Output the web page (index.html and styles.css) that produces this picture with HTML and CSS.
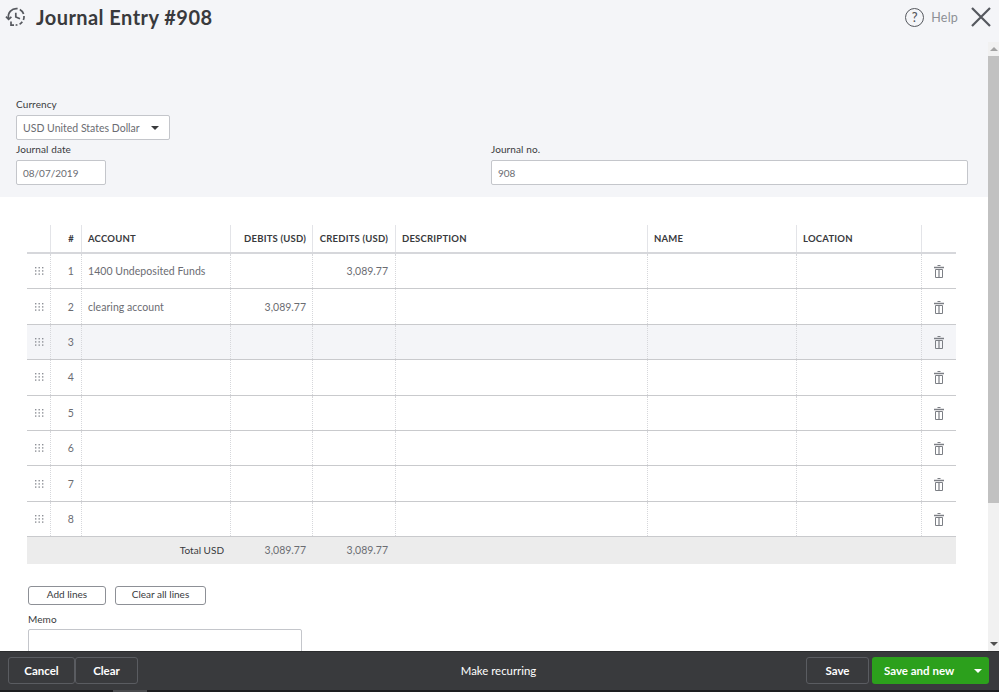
FILE: index.html
```html
<!DOCTYPE html>
<html lang="en">
<head>
<meta charset="utf-8">
<title>Journal Entry #908</title>
<link rel="stylesheet" href="styles.css">
</head>
<body>
<div class="app">
  <div class="viewport">
    <header class="header">
      <div class="title-wrap">
        <svg class="clock" viewBox="0 0 22 22" width="22" height="22" fill="none" stroke="#55585e" stroke-width="1.7">
          <path d="M3.6 12.5 A8 8 0 0 1 12.6 2.7" />
          <path d="M14.8 3.6 A8 8 0 0 1 18.6 8" />
          <path d="M19 10 A8 8 0 0 1 18.4 14" />
          <path d="M17.3 15.8 A8 8 0 0 1 14.6 18.2" />
          <path d="M12.4 18.9 A8 8 0 0 1 10.6 19" />
          <path d="M10.8 6.8 V11 L15 12.8" />
          <path d="M1 10.6 L3.6 13.4 L6.4 10.8" />
          <path d="M6 15.6 V19.2 H9" />
        </svg>
        <h1 class="title">Journal Entry #908</h1>
      </div>
      <div class="header-actions">
        <span class="help-icon">?</span>
        <span class="help-text">Help</span>
        <svg class="close" viewBox="0 0 20 20" width="20" height="20" fill="none" stroke="#55585e" stroke-width="2.2">
          <path d="M1 1 L19 19 M19 1 L1 19" />
        </svg>
      </div>
    </header>
    <div class="page-row">
      <main class="content">
        <section class="top-form">
          <label class="field-label">Currency</label>
          <div class="select-box">
            <span>USD United States Dollar</span>
            <span class="caret"></span>
          </div>
          <div class="date-row">
            <div class="date-col">
              <label class="field-label">Journal date</label>
              <div class="input date-input">08/07/2019</div>
            </div>
            <div class="no-col">
              <label class="field-label">Journal no.</label>
              <div class="input no-input">908</div>
            </div>
          </div>
        </section>
        <section class="table-area">
          <div class="grid-table">
            <div class="row head">
              <div class="c c-drag"></div>
              <div class="c c-num">#</div>
              <div class="c c-acct">ACCOUNT</div>
              <div class="c c-deb">DEBITS (USD)</div>
              <div class="c c-cred">CREDITS (USD)</div>
              <div class="c c-desc">DESCRIPTION</div>
              <div class="c c-name">NAME</div>
              <div class="c c-loc">LOCATION</div>
              <div class="c c-del"></div>
            </div>
            <div class="row body-row">
              <div class="c c-drag"><svg class="dots" width="9" height="9"><use href="#dots"/></svg></div>
              <div class="c c-num">1</div>
              <div class="c c-acct">1400 Undeposited Funds</div>
              <div class="c c-deb"></div>
              <div class="c c-cred">3,089.77</div>
              <div class="c c-desc"></div>
              <div class="c c-name"></div>
              <div class="c c-loc"></div>
              <div class="c c-del"><svg class="trash" width="10" height="13"><use href="#trash"/></svg></div>
            </div>
            <div class="row body-row">
              <div class="c c-drag"><svg class="dots" width="9" height="9"><use href="#dots"/></svg></div>
              <div class="c c-num">2</div>
              <div class="c c-acct">clearing account</div>
              <div class="c c-deb">3,089.77</div>
              <div class="c c-cred"></div>
              <div class="c c-desc"></div>
              <div class="c c-name"></div>
              <div class="c c-loc"></div>
              <div class="c c-del"><svg class="trash" width="10" height="13"><use href="#trash"/></svg></div>
            </div>
            <div class="row body-row shaded">
              <div class="c c-drag"><svg class="dots" width="9" height="9"><use href="#dots"/></svg></div>
              <div class="c c-num">3</div>
              <div class="c c-acct"></div>
              <div class="c c-deb"></div>
              <div class="c c-cred"></div>
              <div class="c c-desc"></div>
              <div class="c c-name"></div>
              <div class="c c-loc"></div>
              <div class="c c-del"><svg class="trash" width="10" height="13"><use href="#trash"/></svg></div>
            </div>
            <div class="row body-row">
              <div class="c c-drag"><svg class="dots" width="9" height="9"><use href="#dots"/></svg></div>
              <div class="c c-num">4</div>
              <div class="c c-acct"></div>
              <div class="c c-deb"></div>
              <div class="c c-cred"></div>
              <div class="c c-desc"></div>
              <div class="c c-name"></div>
              <div class="c c-loc"></div>
              <div class="c c-del"><svg class="trash" width="10" height="13"><use href="#trash"/></svg></div>
            </div>
            <div class="row body-row">
              <div class="c c-drag"><svg class="dots" width="9" height="9"><use href="#dots"/></svg></div>
              <div class="c c-num">5</div>
              <div class="c c-acct"></div>
              <div class="c c-deb"></div>
              <div class="c c-cred"></div>
              <div class="c c-desc"></div>
              <div class="c c-name"></div>
              <div class="c c-loc"></div>
              <div class="c c-del"><svg class="trash" width="10" height="13"><use href="#trash"/></svg></div>
            </div>
            <div class="row body-row">
              <div class="c c-drag"><svg class="dots" width="9" height="9"><use href="#dots"/></svg></div>
              <div class="c c-num">6</div>
              <div class="c c-acct"></div>
              <div class="c c-deb"></div>
              <div class="c c-cred"></div>
              <div class="c c-desc"></div>
              <div class="c c-name"></div>
              <div class="c c-loc"></div>
              <div class="c c-del"><svg class="trash" width="10" height="13"><use href="#trash"/></svg></div>
            </div>
            <div class="row body-row">
              <div class="c c-drag"><svg class="dots" width="9" height="9"><use href="#dots"/></svg></div>
              <div class="c c-num">7</div>
              <div class="c c-acct"></div>
              <div class="c c-deb"></div>
              <div class="c c-cred"></div>
              <div class="c c-desc"></div>
              <div class="c c-name"></div>
              <div class="c c-loc"></div>
              <div class="c c-del"><svg class="trash" width="10" height="13"><use href="#trash"/></svg></div>
            </div>
            <div class="row body-row">
              <div class="c c-drag"><svg class="dots" width="9" height="9"><use href="#dots"/></svg></div>
              <div class="c c-num">8</div>
              <div class="c c-acct"></div>
              <div class="c c-deb"></div>
              <div class="c c-cred"></div>
              <div class="c c-desc"></div>
              <div class="c c-name"></div>
              <div class="c c-loc"></div>
              <div class="c c-del"><svg class="trash" width="10" height="13"><use href="#trash"/></svg></div>
            </div>
            <div class="row total">
              <div class="total-label">Total USD</div>
              <div class="total-val deb">3,089.77</div>
              <div class="total-val cred">3,089.77</div>
            </div>
          </div>
          <div class="line-buttons">
            <button class="btn-line add">Add lines</button>
            <button class="btn-line clear">Clear all lines</button>
          </div>
          <label class="field-label memo-label">Memo</label>
          <div class="memo"></div>
        </section>
      </main>
      <div class="scrollbar">
        <div class="arrow-btn"><span class="arrow-up"></span></div>
        <div class="thumb"></div>
        <div class="track"></div>
        <div class="arrow-btn low"><span class="arrow-down"></span></div>
      </div>
    </div>
  </div>
  <footer class="footer">
    <div class="foot-left">
      <button class="btn-dark cancel">Cancel</button>
      <button class="btn-dark clr">Clear</button>
    </div>
    <div class="foot-center">Make recurring</div>
    <div class="foot-right">
      <button class="btn-dark save">Save</button>
      <div class="btn-green">
        <span class="green-main">Save and new</span>
        <span class="green-caret"></span>
      </div>
    </div>
  </footer>
  <div class="bottom-strip"><span class="strip-tab"></span></div>
</div>
<svg class="defs" width="0" height="0">
  <defs>
    <g id="dots" fill="#8d9096">
      <rect x="0" y="0" width="1.4" height="1.4"/><rect x="3.5" y="0" width="1.4" height="1.4"/><rect x="7" y="0" width="1.4" height="1.4"/>
      <rect x="0" y="3.2" width="1.4" height="1.4"/><rect x="3.5" y="3.2" width="1.4" height="1.4"/><rect x="7" y="3.2" width="1.4" height="1.4"/>
      <rect x="0" y="6.4" width="1.4" height="1.4"/><rect x="3.5" y="6.4" width="1.4" height="1.4"/><rect x="7" y="6.4" width="1.4" height="1.4"/>
    </g>
    <g id="trash" fill="none" stroke="#7c7f85">
      <path d="M3.5 .5 H6.5" />
      <path d="M0 2.5 H10" stroke-width="1.5"/>
      <path d="M1.5 4.5 H8.5 V12.5 H1.5 Z" />
      <path d="M5 4.5 V12.5" stroke-width="1.2"/>
    </g>
  </defs>
</svg>
</body>
</html>
```

FILE: styles.css
```css
* { box-sizing: border-box; }
html, body { margin: 0; padding: 0; height: 100%; overflow: hidden; }
body { font-family: "Lato", "Open Sans", sans-serif; color: #393a3d; background: #fff; }
.defs { display: block; height: 0; }

.app { width: 999px; height: 692px; display: flex; flex-direction: column; overflow: hidden; }
.viewport { flex: 1 1 auto; min-height: 0; display: flex; flex-direction: column; overflow: hidden; }

/* header */
.header { flex: 0 0 42px; background: #f4f5f8; display: flex; justify-content: space-between; padding: 6px 8px 0 5px; }
.title-wrap { display: flex; align-items: flex-start; gap: 9px; }
.title { margin: 0; font-size: 20px; line-height: 22px; font-weight: 700; color: #393a3d; letter-spacing: .45px; }
.clock { margin-top: 0; }
.header-actions { display: flex; align-items: flex-start; }
.help-icon { width: 19px; height: 19px; margin-top: 2px; border: 1.5px solid #55585e; border-radius: 50%; font-size: 13px; line-height: 16px; text-align: center; color: #55585e; font-weight: 500; }
.help-text { margin: 4px 0 0 7px; font-size: 12.5px; line-height: 16px; color: #8d9096; letter-spacing: .2px; }
.close { margin: 1px 0 0 13px; }

.page-row { flex: 1 1 auto; min-height: 0; display: flex; }
.content { flex: 1 1 auto; min-width: 0; overflow: hidden; }

/* top form */
.top-form { height: 155px; background: #f4f5f8; padding: 56px 20px 0 16px; }
.field-label { display: block; font-size: 10px; line-height: 13px; color: #393a3d; letter-spacing: .1px; }
.select-box { width: 154px; height: 25px; margin-top: 4px; background: #fff; border: 1px solid #c4c6cb; border-radius: 2px; display: flex; align-items: center; justify-content: space-between; padding: 0 10px 0 6px; font-size: 10.5px; color: #6b6c72; }
.caret { width: 0; height: 0; border-left: 4px solid transparent; border-right: 4px solid transparent; border-top: 4px solid #393a3d; }
.date-row { display: flex; margin-top: 3px; }
.date-col { width: 475px; }
.no-col { width: 477px; }
.input { height: 25px; margin-top: 4px; background: #fff; border: 1px solid #c4c6cb; border-radius: 2px; display: flex; align-items: center; padding: 0 6px; font-size: 10px; color: #6b6c72; }
.date-input { width: 90px; }
.no-input { width: 477px; }

/* table */
.table-area { padding: 28px 0 0 27px; }
.grid-table { width: 929px; }
.row { display: flex; }
.c { height: 100%; border-right: 1px dotted #d6d7db; font-size: 10.5px; display: flex; align-items: center; flex: 0 0 auto; color: #6b6c72; letter-spacing: .05px; }
.c:last-child { border-right: 0; }
.c-drag { width: 24px; justify-content: center; }
.c-num { width: 31px; justify-content: flex-end; padding-right: 7px; }
.c-acct { width: 149px; padding-left: 6px; }
.c-deb { width: 82px; justify-content: flex-end; padding-right: 6px; }
.c-cred { width: 83px; justify-content: flex-end; padding-right: 7px; }
.c-desc { width: 252px; padding-left: 6px; }
.c-name { width: 149px; padding-left: 6px; }
.c-loc { width: 125px; padding-left: 6px; }
.c-del { width: 34px; justify-content: center; }

.head { height: 29px; border-bottom: 2px solid #d6d7db; }
.head .c { font-size: 9.5px; font-weight: 700; color: #393a3d; letter-spacing: .2px; border-right: 1px solid #e3e4e8; }
.head .c:last-child { border-right: 0; }
.body-row { height: 35.4px; border-bottom: 1px solid #c9cacd; }
.body-row .c-num { font-size: 10.5px; }
.body-row .c-deb, .body-row .c-cred { font-size: 10.5px; letter-spacing: 0; }
.shaded { background: #f4f5f8; }
.dots, .trash { display: block; }
.c-drag .dots { margin: 1px 0 0 1px; }
.c-del .trash { margin-top: 1px; }

.total { height: 27px; padding-bottom: 1px; background: #ececec; align-items: center; font-size: 10px; color: #6b6c72; }
.total-label { width: 197px; text-align: right; color: #393a3d; }
.total-val { width: 82px; text-align: right; font-size: 10.5px; }
.cred { width: 83px; padding-right: 1px; }

.line-buttons { display: flex; gap: 9px; margin: 21.5px 0 0 1px; }
.btn-line { height: 19px; padding: 0 0 2px; background: #fff; border: 1px solid #8d9096; border-radius: 3px; font-family: inherit; font-size: 10px; color: #393a3d; }
.add { width: 78px; }
.clear { width: 91px; }
.memo-label { margin: 8.5px 0 0 1px; }
.memo { width: 274px; height: 60px; margin: 3px 0 0 1px; background: #fff; border: 1px solid #c4c6cb; border-radius: 2px; }

/* scrollbar */
.scrollbar { flex: 0 0 11px; display: flex; flex-direction: column; background: #f1f1f1; }
.arrow-btn { height: 14px; flex: 0 0 14px; display: flex; align-items: center; justify-content: center; }
.arrow-up { width: 0; height: 0; border-left: 4px solid transparent; border-right: 4px solid transparent; border-bottom: 4px solid #a3a3a3; }
.arrow-down { width: 0; height: 0; border-left: 4px solid transparent; border-right: 4px solid transparent; border-top: 4px solid #505050; }
.thumb { flex: 0 0 447px; background: #c1c1c1; }
.track { flex: 1 1 auto; }

/* footer */
.footer { flex: 0 0 39px; background: #393a3d; border-top: 1px solid #2b2c2e; display: grid; grid-template-columns: 1fr auto 1fr; align-items: center; padding: 0 10px 1px 8px; }
.foot-left, .foot-right { display: flex; }
.foot-right { justify-content: flex-end; }
.btn-dark { height: 27px; background: transparent; border: 1px solid #5a5c61; border-radius: 3px; color: #fff; font-family: inherit; font-size: 11.5px; font-weight: 700; padding: 0; }
.cancel { width: 67px; }
.clr { width: 63px; }
.save { width: 63px; }
.foot-center { font-size: 11.4px; color: #fff; }
.btn-green { width: 117px; height: 27px; margin-left: 3px; background: #2ca01c; border-radius: 3px; display: flex; align-items: center; color: #fff; font-size: 11.5px; font-weight: 700; }
.green-main { flex: 1 1 auto; padding-left: 12px; }
.green-caret { width: 0; height: 0; margin-right: 7px; border-left: 4px solid transparent; border-right: 4px solid transparent; border-top: 4px solid #fff; }

.bottom-strip { flex: 0 0 2px; background: #1d1e20; display: flex; padding-left: 113px; }
.strip-tab { width: 34px; height: 2px; background: #4a4b4e; }
```
